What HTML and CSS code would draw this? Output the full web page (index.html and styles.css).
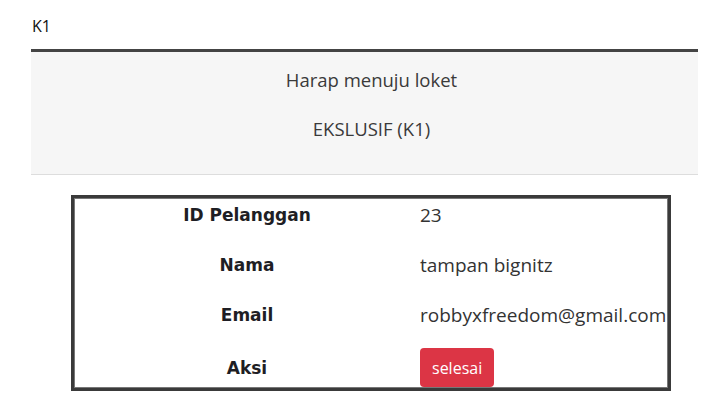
FILE: index.html
```html
<!DOCTYPE html>
<html>
<head>
<meta charset="utf-8">
<link rel="stylesheet" href="styles.css">
</head>
<body>
<div class="page">
  <div class="code">K1</div>
  <div class="banner">
    <p class="line">Harap menuju loket</p>
    <p class="line">EKSLUSIF (K1)</p>
  </div>
  <div class="info">
    <div class="row"><div class="label">ID Pelanggan</div><div class="value">23</div></div>
    <div class="row"><div class="label">Nama</div><div class="value">tampan bignitz</div></div>
    <div class="row"><div class="label">Email</div><div class="value">robbyxfreedom@gmail.com</div></div>
    <div class="row last"><div class="label">Aksi</div><div class="value"><button class="btn">selesai</button></div></div>
  </div>
</div>
</body>
</html>
```
FILE: styles.css
```css
html, body {
  margin: 0;
  padding: 0;
  background: #fff;
}
body {
  font-family: "Open Sans", "Noto Sans", sans-serif;
  color: #333;
}
.page {
  padding: 17px 28px 0 31px;
}
.code {
  font-size: 16px;
  line-height: 18px;
  color: #111;
  padding-left: 1px;
  height: 32px;
}
.banner {
  border-top: 3px solid #444;
  border-bottom: 1px solid #ddd;
  background: #f6f6f6;
  height: 122px;
  display: flex;
  flex-direction: column;
  align-items: center;
  padding-left: 14px;
  box-sizing: content-box;
}
.line {
  margin: 0;
  font-size: 18.5px;
  line-height: 24px;
  color: #3a3a3a;
}
.line:first-child { margin-top: 16px; }
.line:last-child { margin-top: 25px; }
.info {
  margin: 20px 0 0 40px;
  width: 594px;
  border: 3px solid #3a3a3a;
  box-shadow: inset 0 0 0 1px #777;
  background: #fff;
}
.row {
  display: grid;
  grid-template-columns: 346px 1fr;
  height: 50px;
}
.row.last {
  height: 40px;
  align-items: center;
}
.label {
  text-align: center;
  font-family: "DejaVu Sans", sans-serif;
  font-weight: 700;
  font-size: 17px;
  line-height: 34px;
  color: #1e1e24;
}
.value {
  font-size: 19px;
  line-height: 34px;
  white-space: nowrap;
}
.last .label, .last .value { line-height: 40px; }
.btn {
  font-family: inherit;
  font-size: 16px;
  background: #dc3545;
  color: #fff;
  border: 0;
  border-radius: 4px;
  height: 39px;
  padding: 0 12px;
  vertical-align: top;
  margin-top: 0;
}
```
